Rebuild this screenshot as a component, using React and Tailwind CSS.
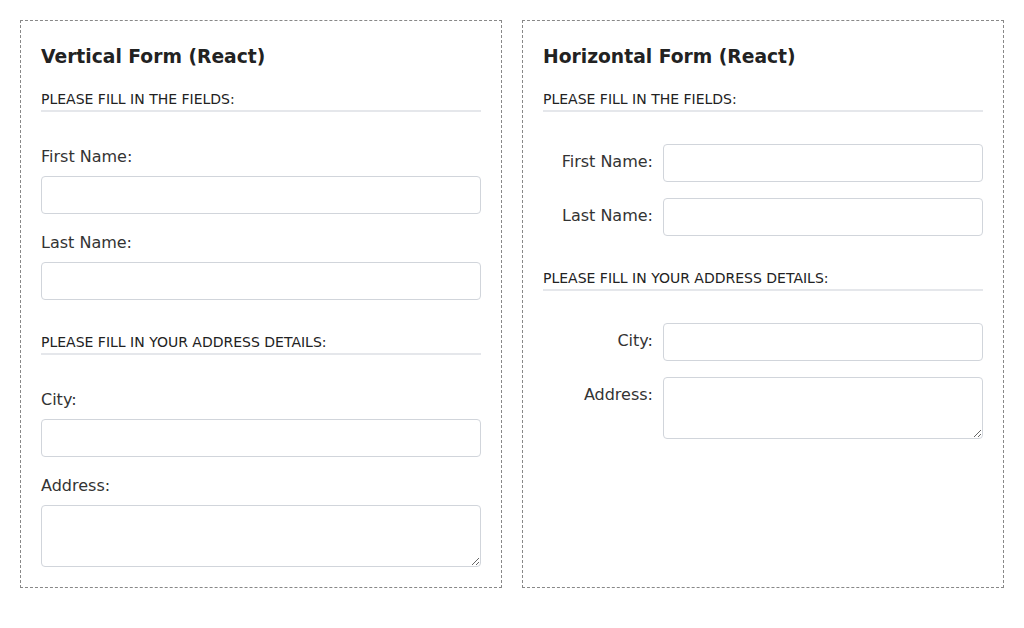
import React from "react";

const font = { fontFamily: '"DejaVu Sans", sans-serif' };

function SectionHeading({ children }) {
  return (
    <h3 className="text-sm leading-5 uppercase text-[#222] border-b-2 border-[#e5e7eb] pb-px mb-8">
      {children}
    </h3>
  );
}

function VerticalField({ label, textarea }) {
  return (
    <div className="flex flex-col">
      <label className="text-base leading-6 text-[#333] pt-px mb-[7px]">{label}</label>
      {textarea ? (
        <textarea className="h-[62px] w-full rounded border border-[#d1d5db] bg-white px-2 py-1 block" />
      ) : (
        <input className="h-[38px] w-full rounded border border-[#d1d5db] bg-white px-2" />
      )}
    </div>
  );
}

function HorizontalField({ label, textarea }) {
  return (
    <div className="grid grid-cols-[110px_1fr] gap-x-[10px] items-start">
      <label className="text-base leading-6 text-[#333] text-right pt-[6px]">{label}</label>
      {textarea ? (
        <textarea className="h-[62px] w-full rounded border border-[#d1d5db] bg-white px-2 py-1 block" />
      ) : (
        <input className="h-[38px] w-full rounded border border-[#d1d5db] bg-white px-2" />
      )}
    </div>
  );
}

export default function App() {
  return (
    <div className="p-5 bg-white min-h-[628px]" style={font}>
      <div className="grid grid-cols-2 gap-5">
        <div className="border border-dashed border-[#888] p-5">
          <h2 className="text-[18.72px] leading-7 font-bold text-[#222] mt-0.5 mb-[18px]">Vertical Form (React)</h2>
          <SectionHeading>Please fill in the fields:</SectionHeading>
          <div className="flex flex-col gap-4">
            <VerticalField label="First Name:" />
            <VerticalField label="Last Name:" />
          </div>
          <div className="mt-8">
            <SectionHeading>Please fill in your address details:</SectionHeading>
            <div className="flex flex-col gap-4">
              <VerticalField label="City:" />
              <VerticalField label="Address:" textarea />
            </div>
          </div>
        </div>
        <div className="border border-dashed border-[#888] p-5">
          <h2 className="text-[18.72px] leading-7 font-bold text-[#222] mt-0.5 mb-[18px]">Horizontal Form (React)</h2>
          <SectionHeading>Please fill in the fields:</SectionHeading>
          <div className="flex flex-col gap-4">
            <HorizontalField label="First Name:" />
            <HorizontalField label="Last Name:" />
          </div>
          <div className="mt-8">
            <SectionHeading>Please fill in your address details:</SectionHeading>
            <div className="flex flex-col gap-4">
              <HorizontalField label="City:" />
              <HorizontalField label="Address:" textarea />
            </div>
          </div>
        </div>
      </div>
    </div>
  );
}
